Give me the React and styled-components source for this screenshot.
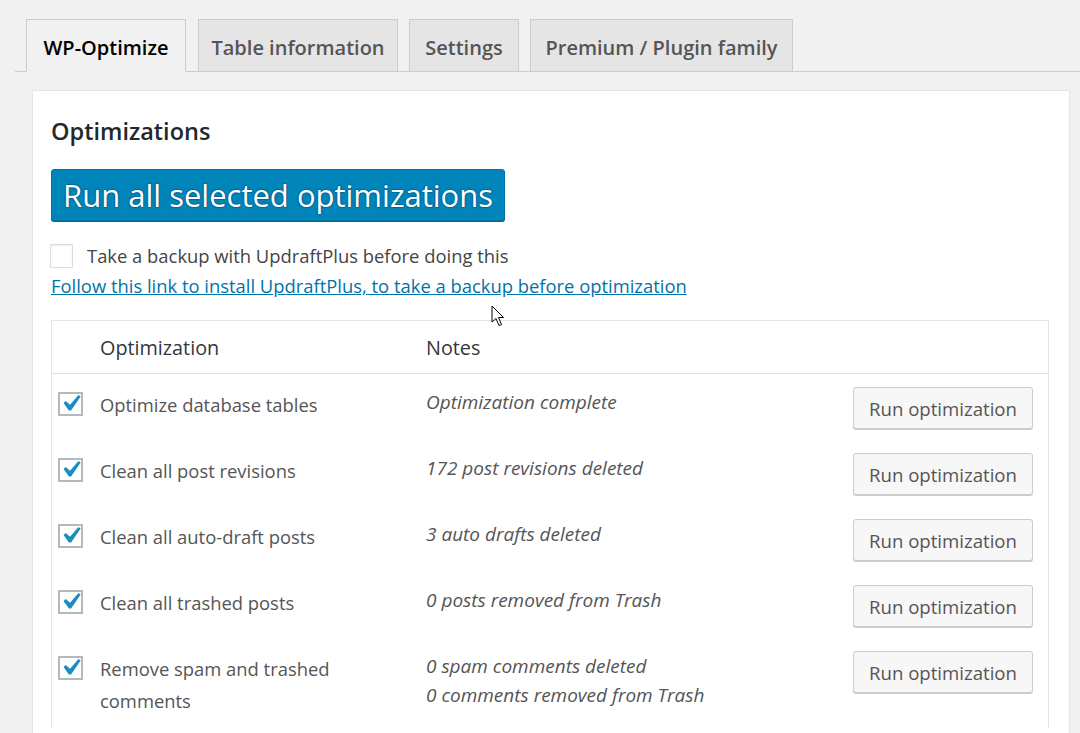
import React from "react";
import styled, { createGlobalStyle } from "styled-components";

const Global = createGlobalStyle`
  html, body { margin: 0; padding: 0; background: #f1f1f1; }
  body { font-family: "Open Sans", "Noto Sans", "Liberation Sans", sans-serif; color: #444; overflow: hidden; }
  * { box-sizing: border-box; }
`;

const Page = styled.div`
  position: relative;
  padding-left: 15px;
  height: 733px;
`;

const Nav = styled.div`
  display: flex;
  gap: 11px;
  padding: 19px 0 0 11px;
  border-bottom: 1px solid #ccc;
`;

const Tab = styled.div`
  width: ${(p) => p.$w}px;
  height: 53px;
  margin-bottom: -1px;
  margin-left: ${(p) => p.$ml || 0}px;
  border: 1px solid #ccc;
  border-bottom-color: ${(p) => (p.$active ? "#f1f1f1" : "#ccc")};
  background: ${(p) => (p.$active ? "#f1f1f1" : "#e5e5e5")};
  color: ${(p) => (p.$active ? "#000" : "#555")};
  font-size: 20px;
  font-weight: 600;
  display: flex;
  align-items: center;
  justify-content: center;
  padding-top: 3px;
  white-space: nowrap;
`;

const Panel = styled.div`
  margin: 18px 10px 0 17px;
  background: #fff;
  border: 1px solid #e5e5e5;
  box-shadow: 0 1px 1px rgba(0, 0, 0, 0.04);
  padding: 25px 20px 0 18px;
  height: 700px;
`;

const Heading = styled.h3`
  margin: 0;
  font-size: 23.5px;
  line-height: 30px;
  font-weight: 600;
  color: #23282d;
`;

const HeroButton = styled.button`
  margin-top: 23px;
  height: 52px;
  padding: 0 11px;
  font-family: inherit;
  font-size: 31px;
  color: #fff;
  background: #0085ba;
  border: 1px solid #0073aa;
  border-radius: 3px;
  box-shadow: 0 1px 0 #006799;
  text-shadow: 0 -1px 1px #006799, 1px 0 1px #006799, 0 1px 1px #006799, -1px 0 1px #006799;
  cursor: pointer;
  display: block;
  line-height: 48px;
`;

const BackupRow = styled.label`
  margin-top: 23px;
  display: flex;
  align-items: center;
  gap: 14px;
  font-size: 18.4px;
  line-height: 24px;
  color: #444;
`;

const EmptyBox = styled.span`
  width: 23px;
  height: 24px;
  margin-left: -1px;
  border: 1px solid #dcdcdc;
  background: #fff;
  box-shadow: inset 0 1px 2px rgba(0, 0, 0, 0.07);
  flex: none;
`;

const Link = styled.a`
  display: block;
  margin-top: 4px;
  font-size: 18.4px;
  line-height: 28px;
  color: #0073aa;
  text-decoration: underline;
`;

const Table = styled.div`
  margin-top: 20px;
  border: 1px solid #e5e5e5;
  border-bottom: none;
`;

const Row = styled.div`
  display: grid;
  grid-template-columns: 48px 326px 1fr auto;
  align-items: ${(p) => (p.$head ? "center" : "start")};
  padding: ${(p) => (p.$head ? "0 15px 0 0" : "13px 15px 11px 0")};
  height: ${(p) => (p.$head ? "53px" : "auto")};
  border-bottom: ${(p) => (p.$head ? "1px solid #e1e1e1" : "none")};
`;

const HeadCell = styled.div`
  font-size: 19.8px;
  color: #32373c;
`;

const CheckBox = styled.span`
  margin: 5px 0 0 6px;
  width: 25px;
  height: 24px;
  border: 2px solid #b4b9be;
  background: #fff;
  display: flex;
  align-items: center;
  justify-content: center;
  overflow: visible;
  svg { flex: none; margin-top: -1px; }
`;

const Label = styled.div`
  font-size: 18.4px;
  line-height: 32px;
  color: #555;
  padding-top: 2px;
  padding-right: 20px;
`;

const Notes = styled.div`
  font-size: 19px;
  line-height: 29px;
  font-style: italic;
  color: #555;
  margin-top: 1px;
`;

const RunButton = styled.button`
  width: 180px;
  height: 42px;
  font-family: inherit;
  font-size: 18.6px;
  color: #555;
  background: #f7f7f7;
  border: 1px solid #ccc;
  border-radius: 3px;
  box-shadow: 0 1px 0 #ccc;
  padding: 0;
  cursor: pointer;
`;

const Cursor = styled.svg`
  position: absolute;
  left: 491px;
  top: 305px;
`;

const Check = () => (
  <svg width="33" height="33" viewBox="0 0 20 20">
    <path d="M14.83 4.89l1.34.94-5.81 8.38H9.02L5.78 9.67l1.34-1.25 2.57 2.4z" fill="#1e8cbe" />
  </svg>
);

const rows = [
  { label: ["Optimize database tables"], notes: ["Optimization complete"] },
  { label: ["Clean all post revisions"], notes: ["172 post revisions deleted"] },
  { label: ["Clean all auto-draft posts"], notes: ["3 auto drafts deleted"] },
  { label: ["Clean all trashed posts"], notes: ["0 posts removed from Trash"] },
  {
    label: ["Remove spam and trashed", "comments"],
    notes: ["0 spam comments deleted", "0 comments removed from Trash"],
  },
];

export default function App() {
  return (
    <>
      <Global />
      <Page>
        <Nav>
          <Tab $w={160} $active>WP-Optimize</Tab>
          <Tab $w={200} $ml={1}>Table information</Tab>
          <Tab $w={110}>Settings</Tab>
          <Tab $w={263}>Premium / Plugin family</Tab>
        </Nav>
        <Panel>
          <Heading>Optimizations</Heading>
          <HeroButton>Run all selected optimizations</HeroButton>
          <BackupRow>
            <EmptyBox />
            Take a backup with UpdraftPlus before doing this
          </BackupRow>
          <Link href="#">Follow this link to install UpdraftPlus, to take a backup before optimization</Link>
          <Table>
            <Row $head>
              <span />
              <HeadCell>Optimization</HeadCell>
              <HeadCell>Notes</HeadCell>
              <span />
            </Row>
            {rows.map((r, i) => (
              <Row key={i}>
                <CheckBox><Check /></CheckBox>
                <Label>
                  {r.label.map((l, j) => (
                    <div key={j}>{l}</div>
                  ))}
                </Label>
                <Notes>
                  {r.notes.map((n, j) => (
                    <div key={j}>{n}</div>
                  ))}
                </Notes>
                <RunButton>Run optimization</RunButton>
              </Row>
            ))}
          </Table>
        </Panel>
        <Cursor width="14" height="22" viewBox="0 0 14 22">
          <path d="M1 1 L1 17 L5 13.5 L8 20.5 L10.5 19.5 L7.5 12.5 L12.5 12.5 Z" fill="#fff" stroke="#000" strokeWidth="1" strokeLinejoin="round" />
        </Cursor>
      </Page>
    </>
  );
}
